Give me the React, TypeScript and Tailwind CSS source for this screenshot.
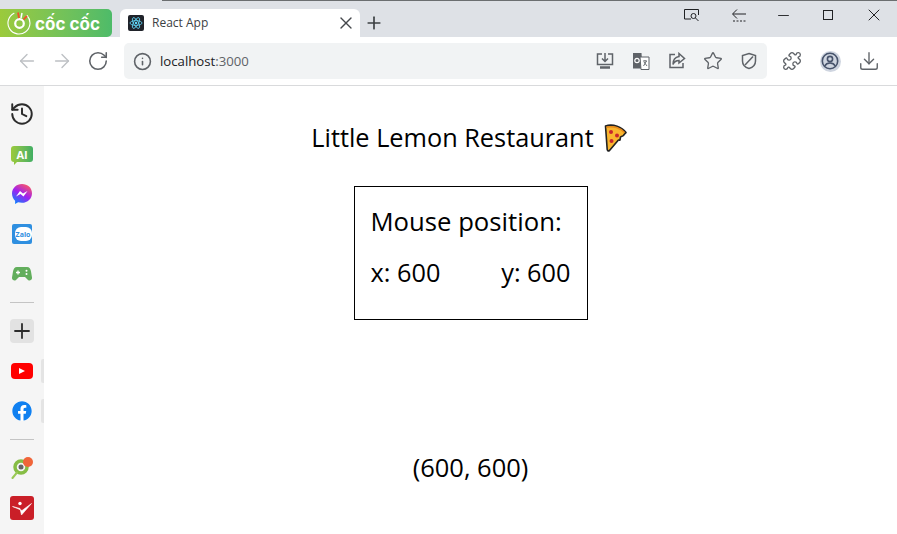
import React from "react";
import {
  ArrowLeft,
  ArrowRight,
  RotateCw,
  Info,
  X,
  Plus,
  Star,
  Puzzle,
  Download,
  Minus,
  History,
} from "lucide-react";
import { FaFacebook } from "react-icons/fa";

const sans = "font-['Open_Sans','Noto_Sans',sans-serif]";

const ReactLogo = () => (
  <div className="flex h-4 w-4 items-center justify-center rounded-[2px] bg-[#20232a]">
    <svg viewBox="0 0 24 24" className="h-4 w-4" fill="none" stroke="#61dafb" strokeWidth="1.2">
      <circle cx="12" cy="12" r="1.8" fill="#61dafb" stroke="none" />
      <ellipse cx="12" cy="12" rx="9" ry="3.6" />
      <ellipse cx="12" cy="12" rx="9" ry="3.6" transform="rotate(60 12 12)" />
      <ellipse cx="12" cy="12" rx="9" ry="3.6" transform="rotate(120 12 12)" />
    </svg>
  </div>
);

const CocCocMark = () => (
  <svg viewBox="0 0 24 24" className="h-6 w-6 shrink-0" fill="none">
    <path d="M20 4.500A11 11 0 1 1 7 2.200" stroke="#fff" strokeWidth="1.1" strokeLinecap="round" />
    <circle cx="12.500" cy="12.500" r="4.300" stroke="#fff" strokeWidth="2.200" />
    <path d="M11 1.500l1 5.500" stroke="#f0502d" strokeWidth="1.800" />
    <path d="M15 2l-1 5" stroke="#fff" strokeWidth="1.500" />
    <path d="M20 5l-3.500 3.500" stroke="#f0502d" strokeWidth="1.800" />
  </svg>
);

const TabStrip = () => (
  <div className="relative flex h-[37px] shrink-0 items-end bg-[#dee1e6]">
    {/* thin dark edge of the window above */}
    <div className="absolute left-[162px] right-0 top-0 h-px bg-[#6b6e70]" />
    <div className="flex h-[28px] w-[112px] items-center gap-[4px] rounded-r-[5px] bg-gradient-to-r from-[#9bca3b] to-[#4dbb69] pl-[7px]">
      <CocCocMark />
      <span className="mt-[3px] font-['Inter',sans-serif] text-[17px] font-bold leading-none text-white">cốc cốc</span>
    </div>
    <div className="ml-2 flex h-[28px] w-[240px] items-center rounded-t-[6px] bg-white pl-2 pr-1">
      <ReactLogo />
      <span className="ml-2 flex-1 font-['Open_Sans',sans-serif] text-[12px] text-[#3c4043]">React App</span>
      <X size={20} strokeWidth={1.6} className="text-[#45484c]" />
    </div>
    <div className="ml-1 flex h-[28px] items-center">
      <Plus size={20} strokeWidth={2} className="text-[#3c4043]" />
    </div>
    <div className="ml-auto flex h-[30px] items-center self-start pr-[13px] text-[#202124]">
      <svg viewBox="0 0 18 14" className="mr-[30px] h-[14px] w-[18px]" fill="none" stroke="currentColor" strokeWidth="1">
        <path d="M8 11H1.500V1.500h14V7" />
        <circle cx="10.500" cy="8" r="2.500" />
        <path d="M12.500 10l3 3" />
      </svg>
      <svg viewBox="0 0 16 14" className="mr-[28.5px] h-[14px] w-[16px]" fill="none" stroke="currentColor" strokeWidth="1">
        <path d="M15 6H2M6 1.500L1.500 6 6 10.500" />
        <path d="M2 13h13" strokeDasharray="2 1.500" />
      </svg>
      <Minus size={17} strokeWidth={1.300} className="mr-[31px]" />
      <div className="mr-[31px] h-[10px] w-[10px] border border-[#202124]" />
      <X size={20} strokeWidth={1.200} />
    </div>
  </div>
);

const Toolbar = () => (
  <div className="flex h-[49px] shrink-0 items-center border-b border-[#d9dadc] bg-white">
    <ArrowLeft size={22} strokeWidth={1.500} className="ml-4 text-[#bdc0c4]" />
    <ArrowRight size={22} strokeWidth={1.500} className="ml-[13px] text-[#bdc0c4]" />
    <RotateCw size={22} strokeWidth={1.700} className="ml-[14px] text-[#5f6368]" />
    <div className="ml-[15px] flex h-[36px] w-[643px] items-center rounded-[5px] bg-[#f1f3f4] pl-[8.500px] pr-[9px]">
      <Info size={19} strokeWidth={2} className="text-[#5f6368]" />
      <span className={`${sans} ml-[8.500px] mt-px text-[13.200px] text-[#202124]`}>
        localhost<span className="text-[#5f6368]">:3000</span>
      </span>
      <div className="ml-auto flex items-center gap-[18px] text-[#5f6368]">
        <svg viewBox="0 0 18 18" className="h-[18px] w-[18px]" fill="none" stroke="currentColor" strokeWidth="1.500">
          <path d="M6 2H1.500v10.500h15V2H12M9 1v8M6 6.500L9 9.500 12 6.500" />
          <path d="M4 15.500h10" strokeWidth="2.500" />
        </svg>
        <svg viewBox="0 0 18 18" className="h-[18px] w-[18px]">
          <path d="M1 1h8.500l1 15.500H1z" fill="#5f6368" />
          <path d="M8 5h9v12.500H9z" fill="#fff" stroke="#5f6368" strokeWidth="1" />
          <circle cx="5" cy="8.500" r="2.200" fill="none" stroke="#fff" strokeWidth="1.200" />
          <path d="M11 9h4M13 8v1M11.500 14l3-5M12 10l3 4" stroke="#5f6368" strokeWidth="0.900" fill="none" />
        </svg>
        <svg viewBox="0 0 18 18" className="h-[18px] w-[18px]" fill="none" stroke="currentColor" strokeWidth="1.500">
          <path d="M7 2.500H2v13h13V11" />
          <path d="M11 1.500L16.500 6.500 11 11V8.500C8 8.500 6 10 5 12.500 5 8 7.500 5 11 4.500z" />
        </svg>
        <Star size={20} strokeWidth={1.600} className="-mx-px" />
        <svg viewBox="0 0 18 18" className="h-[18px] w-[18px]" fill="none" stroke="currentColor" strokeWidth="1.500">
          <path d="M9 1.500L15.500 3.500V9C15.500 13 12.500 15.500 9 16.500 5.500 15.500 2.500 13 2.500 9V3.500z" />
          <path d="M13 4.500L5 13" />
        </svg>
      </div>
    </div>
    <div className="ml-[15px] flex items-center text-[#5f6368]">
      <Puzzle size={20} strokeWidth={1.600} />
      <div className="ml-[17.500px] flex h-[21px] w-[21px] items-center justify-center rounded-full bg-[#cfd5e0]">
        <svg viewBox="0 0 18 18" className="h-[18px] w-[18px]" fill="none" stroke="#47536b" strokeWidth="1.600">
          <circle cx="9" cy="9" r="7.700" />
          <circle cx="9" cy="7" r="2.600" />
          <path d="M3.800 14C5 11.500 7 11 9 11s4 .5 5.200 3" />
        </svg>
      </div>
      <Download size={22} strokeWidth={1.500} className="ml-[17.500px]" />
    </div>
  </div>
);

const SideRow = ({ children, pinned }: { children: React.ReactNode; pinned?: boolean }) => (
  <div className="relative flex h-10 w-full items-center justify-center">
    {children}
    {pinned && <div className="absolute right-0 top-2 h-6 w-[3px] rounded-l-[2px] bg-[#e4e4e4]" />}
  </div>
);

const Sidebar = () => (
  <aside className="flex w-[44px] shrink-0 flex-col items-center bg-[#f5f5f5] pt-2">
    <SideRow>
      <History size={26} strokeWidth={1.800} className="text-[#2b2b2b]" />
    </SideRow>
    <SideRow>
      <div className="relative flex h-[16px] w-[22px] items-center justify-center rounded-[3px] bg-gradient-to-r from-[#9bca3b] to-[#3fae62]">
        <span className="font-['Open_Sans',sans-serif] text-[11px] font-bold leading-none text-white">AI</span>
        <div className="absolute bottom-[-3px] left-[3px] h-0 w-0 border-r-[4px] border-t-[4px] border-r-transparent border-t-[#8ec63f]" />
      </div>
    </SideRow>
    <SideRow>
      <svg viewBox="0 0 20 20" className="h-5 w-5">
        <defs>
          <linearGradient id="ms" x1="0.2" y1="1" x2="0.8" y2="0">
            <stop offset="0" stopColor="#0a84ff" />
            <stop offset="0.5" stopColor="#a020f0" />
            <stop offset="1" stopColor="#ff5a5f" />
          </linearGradient>
        </defs>
        <path d="M10 0C4.400 0 0 4.100 0 9.600c0 2.900 1.200 5.400 3.100 7.100v3.300l3-1.700c1.200.3 2.500.5 3.900.5 5.600 0 10-4.100 10-9.600S15.600 0 10 0z" fill="url(#ms)" />
        <path d="M4 12.500l4-5.500 3 2.500 4.500-2.500-4 5.500-3-2.500z" fill="#fff" />
      </svg>
    </SideRow>
    <SideRow>
      <div className="flex h-5 w-5 items-center justify-center rounded-[2px] bg-[#2f8fe0]">
        <div className="ml-[2px] flex h-[14px] w-[17px] items-center justify-center rounded-[6px] bg-white">
          <span className="font-['Open_Sans',sans-serif] text-[7px] font-bold leading-none text-[#2f8fe0]">Zalo</span>
        </div>
      </div>
    </SideRow>
    <SideRow>
      <svg viewBox="0 0 20 14" className="h-[14px] w-5">
        <path d="M5 0h10c2.500 0 3.500 2 4 4.500l1 6c.3 2-2 4-4 2.500L13 10H7l-3 3c-2 1.500-4.300-.5-4-2.500l1-6C1.500 2 2.500 0 5 0z" fill="#62ae5c" />
        <path d="M4 5.500h4M6 3.500v4" stroke="#fff" strokeWidth="1.300" />
        <circle cx="14.500" cy="3.800" r="1" fill="#fff" />
        <circle cx="14.500" cy="7" r="1" fill="#fff" />
      </svg>
    </SideRow>
    <div className="mb-[8px] mt-[8px] h-px w-6 bg-[#c4c4c4]" />
    <SideRow>
      <div className="flex h-6 w-6 items-center justify-center rounded-[4px] bg-[#e2e2e2]">
        <Plus size={26} strokeWidth={1.800} className="text-[#2b2b2b]" />
      </div>
    </SideRow>
    <SideRow pinned>
      <div className="flex h-4 w-[22px] items-center justify-center rounded-[4px] bg-[#ff0000]">
        <div className="h-0 w-0 border-y-[3.500px] border-l-[6px] border-y-transparent border-l-white" />
      </div>
    </SideRow>
    <SideRow pinned>
      <div className="flex h-5 w-5 items-center justify-center rounded-full bg-white">
        <FaFacebook size={20} className="text-[#1080f0]" />
      </div>
    </SideRow>
    <div className="mb-[8px] mt-[8px] h-px w-6 bg-[#c4c4c4]" />
    <SideRow>
      <div className="relative h-[22px] w-[22px]">
        <svg viewBox="0 0 22 22" className="h-[22px] w-[22px]" fill="none">
          <circle cx="10" cy="10" r="6" stroke="#86bd45" strokeWidth="3.500" />
          <circle cx="10" cy="10" r="2.500" fill="#666" />
          <path d="M6 15.500l-4.500 5.500" stroke="#9ac957" strokeWidth="2" strokeLinecap="round" />
        </svg>
        <div className="absolute right-0 top-0 h-[10px] w-[10px] rounded-full bg-[#f0653a]" />
      </div>
    </SideRow>
    <SideRow>
      <div className="flex h-6 w-6 items-center justify-center rounded-[3px] bg-[#ca1f28]">
        <svg viewBox="0 0 24 24" className="h-6 w-6" fill="none">
          <circle cx="10" cy="7.500" r="1.700" fill="#fff" />
          <path d="M2.500 10.500L10 12.500 11.500 19 21.500 7.500 12 14.500 5 11.500z" fill="#fff" stroke="#fff" strokeWidth="0.600" />
        </svg>
      </div>
    </SideRow>
  </aside>
);

const Pizza = () => (
  <svg viewBox="0 0 23 29" className="h-[29px] w-[23px] shrink-0">
    <path d="M1.500 3C9 .5 18 4 22 9.500c-1 1.500-2 1.500-2.500 3-1 1-2 .5-3 1.500l-.5 3c-1 .5-1.500-.5-2 .5L5.500 27.500C4 28.500 3.500 27.500 3.200 26.500z" fill="#f9b52e" stroke="#222" strokeWidth="1.600" strokeLinejoin="round" />
    <path d="M2.500 4.200C9 2.500 16.500 5 20.500 9.500" fill="none" stroke="#e88a1a" strokeWidth="1.500" />
    <circle cx="7" cy="9" r="2" fill="#c8262c" />
    <circle cx="13" cy="12.500" r="2" fill="#c8262c" />
    <circle cx="7.500" cy="18" r="2" fill="#c8262c" />
  </svg>
);

export default function App() {
  return (
    <div className="flex h-[534px] w-[897px] flex-col overflow-hidden bg-white">
      <TabStrip />
      <Toolbar />
      <div className="flex min-h-0 flex-1">
        <Sidebar />
        <main className={`${sans} flex flex-1 flex-col items-center pt-[33px] text-black`}>
          <div className="flex h-[36px] items-center gap-[10px] pr-[3px]">
            <h1 className="text-[25.300px] font-normal leading-[36px]">Little Lemon Restaurant</h1>
            <Pizza />
          </div>
          <div className="mt-[31px] flex h-[134px] w-[234px] flex-col border border-black px-4 pt-[15px]">
            <div className="text-[25.700px] leading-[40px]">Mouse position:</div>
            <div className="mt-[10px] flex justify-between text-[25.300px] leading-[40px]">
              <span>x: 600</span>
              <span>y: 600</span>
            </div>
          </div>
          <div className="mt-[129px] text-[25.500px] leading-[36px]">(600, 600)</div>
        </main>
      </div>
    </div>
  );
}
